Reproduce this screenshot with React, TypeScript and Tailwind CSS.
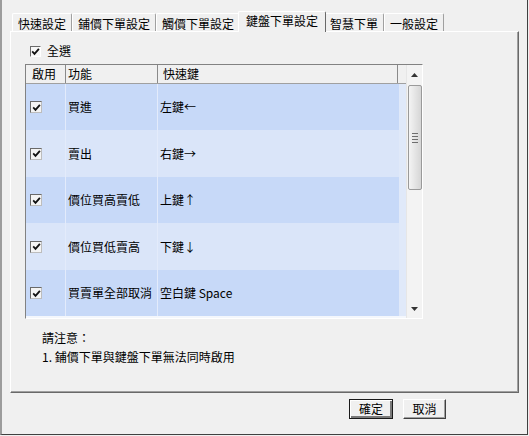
import React from 'react';

const tabs = ['快速設定', '鋪價下單設定', '觸價下單設定', '鍵盤下單設定', '智慧下單', '一般設定'];
const activeTab = 3;

const rows = [
  { name: '買進', key: '左鍵←', h: 'h-[46px]' },
  { name: '賣出', key: '右鍵→', h: 'h-[47px]' },
  { name: '價位買高賣低', key: '上鍵↑', h: 'h-[46px]' },
  { name: '價位買低賣高', key: '下鍵↓', h: 'h-[47px]' },
  { name: '買賣單全部取消', key: '空白鍵 Space', h: 'h-[46px]' },
];

function CheckBox() {
  return (
    <span className="flex h-[12px] w-[12px] shrink-0 items-center justify-center border border-[#6a6a6a] border-b-[#bdbdbd] border-r-[#bdbdbd] bg-[#f4f4f4]">
      <svg width="9" height="9" viewBox="0 0 9 9">
        <path d="M1.2 4.4 L3.5 6.8 L7.9 1.8" fill="none" stroke="#111" strokeWidth="1.8" />
      </svg>
    </span>
  );
}

function Arrow({ up }: { up?: boolean }) {
  return (
    <svg width="7" height="4" viewBox="0 0 7 4">
      <path d={up ? 'M0 4 L3.5 0 L7 4 Z' : 'M0 0 L7 0 L3.5 4 Z'} fill="#333" />
    </svg>
  );
}

function Scrollbar() {
  return (
    <div className="flex w-[16px] flex-col items-center bg-[#f3f3f3] border-l border-[#e6e6e6]">
      <div className="flex h-[18px] w-full items-center justify-center pt-[2px]">
        <Arrow up />
      </div>
      <div className="mt-[2px] flex h-[105px] w-[14px] flex-col items-center justify-center gap-[2px] rounded-[2px] border border-[#9a9a9a] bg-gradient-to-r from-[#f4f4f4] to-[#d6d6d6]">
        <span className="h-px w-[6px] bg-[#6e6e6e]" />
        <span className="h-px w-[6px] bg-[#6e6e6e]" />
        <span className="h-px w-[6px] bg-[#6e6e6e]" />
        <span className="h-px w-[6px] bg-[#6e6e6e]" />
      </div>
      <div className="flex-1" />
      <div className="flex h-[16px] w-full items-center justify-center pb-[3px]">
        <Arrow />
      </div>
    </div>
  );
}

function Button({ label, isDefault }: { label: string; isDefault?: boolean }) {
  return (
    <button
      className={
        'flex h-[20px] items-center justify-center bg-[#f0f0f0] text-[12px] leading-none text-black ' +
        (isDefault
          ? 'w-[44px] border border-[#1a1a1a] shadow-[inset_1px_1px_#ffffff,inset_-2px_-2px_#7a7a7a]'
          : 'w-[43px] border border-t-white border-l-white border-b-[#404040] border-r-[#404040] shadow-[inset_-1px_-1px_#a0a0a0]')
      }
    >
      {label}
    </button>
  );
}

export default function App() {
  return (
    <div className="h-[436px] w-[529px] overflow-hidden bg-[#f0f0f0] font-['Noto_Sans_CJK_TC','Liberation_Sans',sans-serif] text-[12px] text-black">
      <div className="flex h-[435px] w-[528px] flex-col border-b border-r border-[#404040] border-l-2 border-l-[#9c9c9c]">
        {/* tabs */}
        <div className="ml-[10px] mt-[11px] flex h-[20px] items-end">
          {tabs.map((t, i) =>
            i === activeTab ? (
              <div
                key={t}
                className="relative z-10 -mx-[2px] -mb-px flex h-[21px] items-start rounded-t-[2px] border-l border-t border-r border-l-white border-t-white border-r-[#696969] bg-[#f0f0f0] px-[7px] pt-[1px] leading-[16px]"
              >
                {t}
              </div>
            ) : (
              <div
                key={t}
                className="flex h-[18px] items-start rounded-t-[2px] border-l border-t border-r border-l-white border-t-white border-r-[#a0a0a0] px-[5px] pt-[2px] leading-[16px]"
              >
                {t}
              </div>
            )
          )}
        </div>

        {/* panel */}
        <div className="ml-[8px] flex h-[362px] w-[509px] flex-col border-l border-t border-l-white border-t-white border-b border-r border-b-[#696969] border-r-[#696969] shadow-[inset_-1px_-1px_#a0a0a0]">
          <div className="ml-[19px] mt-[13px] flex h-[12px] items-center gap-[6px]">
            <span className="flex h-[11px] w-[11px] items-center justify-center border border-[#6a6a6a] border-b-white border-r-white bg-[#f7f7f7]">
              <svg width="9" height="9" viewBox="0 0 9 9">
                <path d="M1.2 4.4 L3.5 6.8 L7.9 1.8" fill="none" stroke="#111" strokeWidth="1.8" />
              </svg>
            </span>
            <span className="leading-[12px]">全選</span>
          </div>

          {/* list */}
          <div className="ml-[14px] mt-[7px] flex h-[255px] w-[398px] border border-l-[#828282] border-t-[#828282] border-b-white border-r-white bg-white">
            <div className="flex w-[380px] flex-col">
              <div className="flex h-[19px] border-b border-[#a0a0a0] bg-[#f0f0f0] leading-[18px]">
                <div className="w-[40px] border-r border-[#8a8a8a] pl-[6px]">啟用</div>
                <div className="w-[92px] border-r border-[#8a8a8a] pl-[2px]">功能</div>
                <div className="w-[240px] border-r border-[#8a8a8a] pl-[5px]">快速鍵</div>
                <div className="flex-1" />
              </div>
              {rows.map((r, i) => (
                <div key={r.name} className={'flex ' + r.h}>
                  <div className={'flex w-[373px] items-center ' + (i % 2 === 0 ? 'bg-[#c7d9f8]' : 'bg-[#dae5f9]')}>
                    <div className="flex h-full w-[40px] items-center border-r border-[#e3ebfb] pl-[4px]">
                      <CheckBox />
                    </div>
                    <div className="flex h-full w-[92px] items-center border-r border-[#e3ebfb] pl-[2px]">{r.name}</div>
                    <div className="flex h-full flex-1 items-center pl-[2px]">{r.key}</div>
                  </div>
                  <div className="flex-1 bg-[#e0e9f9]" />
                </div>
              ))}
              <div className="flex-1 bg-[#f4f7fc]" />
            </div>
            <Scrollbar />
          </div>

          {/* notice */}
          <div className="ml-[31px] mt-[9px] flex flex-col leading-[19px]">
            <span>請注意：</span>
            <span>1. 鋪價下單與鍵盤下單無法同時啟用</span>
          </div>
        </div>

        {/* buttons */}
        <div className="ml-[347px] mt-[6px] flex gap-[10px]">
          <Button label="確定" isDefault />
          <Button label="取消" />
        </div>
      </div>
    </div>
  );
}
